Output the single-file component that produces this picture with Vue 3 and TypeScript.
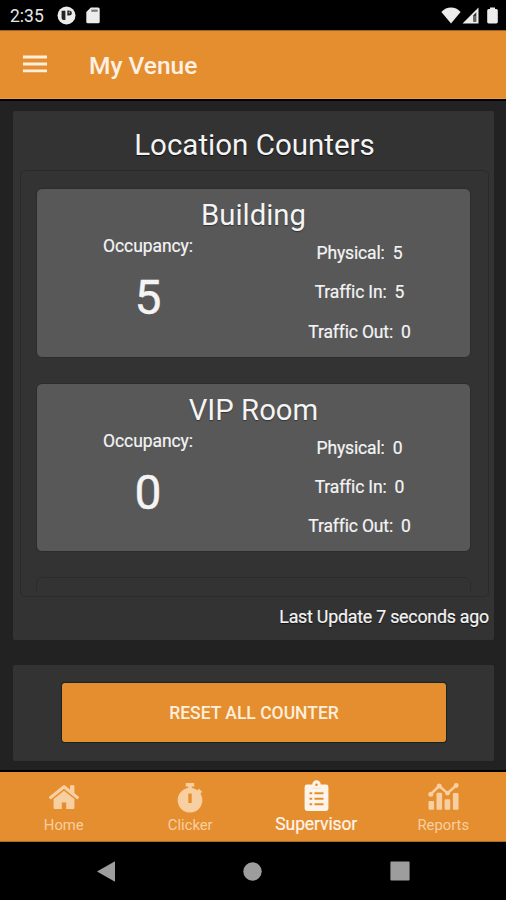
<script setup lang="ts">
interface Counter {
  name: string
  occupancy: number
  physical: number
  trafficIn: number
  trafficOut: number
}

interface Tab {
  id: string
  label: string
}

const counters: Counter[] = [
  { name: 'Building', occupancy: 5, physical: 5, trafficIn: 5, trafficOut: 0 },
  { name: 'VIP Room', occupancy: 0, physical: 0, trafficIn: 0, trafficOut: 0 },
]

const tabs: Tab[] = [
  { id: 'home', label: 'Home' },
  { id: 'clicker', label: 'Clicker' },
  { id: 'supervisor', label: 'Supervisor' },
  { id: 'reports', label: 'Reports' },
]

const activeTab = 'supervisor'
</script>

<template>
  <div class="screen">
    <div class="status">
      <span class="clock">2:35</span>
      <svg class="app-dot" width="19" height="19" viewBox="0 0 19 19">
        <circle cx="9.5" cy="9.5" r="9" fill="#ececec" />
        <path d="M4.600 4.800h3.800v9.200H6.600q-2 0-2-2z" fill="#222" />
        <path d="M10.300 4.600h1.500q3 0 3 2.500t-3 2.500h-1.500z" fill="#222" />
        <path d="M11.700 5.500h1.400v1.900h-1.400z" fill="#999" />
      </svg>
      <svg class="sd" width="14" height="17" viewBox="0 0 14 17">
        <path d="M4.8.5h7.4q1.5 0 1.5 1.5v12.8q0 1.5-1.5 1.5H1.8Q.3 16.300.3 14.800V5z" fill="#ececec" />
        <path d="M5.300 2.600h6.400v2.200H5.300z" fill="#777" />
      </svg>
      <span class="spacer"></span>
      <svg width="20" height="17" viewBox="0 0 20 17">
        <path d="M.4 5Q4.500.6 10 .6T19.600 5L10 16.500z" fill="#ececec" />
      </svg>
      <svg class="signal" width="17" height="17" viewBox="0 0 17 17">
        <path d="M.5 16.500 16.500.5v16z" fill="#ececec" />
        <path d="M11.300 8.200 14.300 5.300v9.500h-3z" fill="#333" />
        <path d="M12.500 9h1v5h-1z" fill="#999" />
      </svg>
      <svg class="battery" width="11" height="17" viewBox="0 0 11 17">
        <path d="M3 .4h5v1.500h1.300q1.500 0 1.500 1.500v11.700q0 1.400-1.500 1.400H1.700Q.2 16.500.2 15.100V3.400q0-1.500 1.500-1.500H3z" fill="#ececec" />
      </svg>
    </div>

    <header class="app-bar">
      <svg class="menu" width="24" height="18" viewBox="0 0 24 18">
        <path d="M0 2h24M0 9h24M0 15.800h24" stroke="#fdeedd" stroke-width="2.800" />
      </svg>
      <h1>My Venue</h1>
    </header>

    <main class="content">
      <section class="panel locations">
        <h2>Location Counters</h2>
        <div class="list">
          <div class="list-view">
            <article v-for="c in counters" :key="c.name" class="card">
              <h3>{{ c.name }}</h3>
              <div class="columns">
                <div class="occupancy">
                  <span>Occupancy:</span>
                  <strong>{{ c.occupancy }}</strong>
                </div>
                <div class="stats">
                  <p>Physical:<b>{{ c.physical }}</b></p>
                  <p>Traffic In:<b>{{ c.trafficIn }}</b></p>
                  <p>Traffic Out:<b>{{ c.trafficOut }}</b></p>
                </div>
              </div>
            </article>
            <div class="card empty"></div>
          </div>
        </div>
        <p class="updated">Last Update 7 seconds ago</p>
      </section>

      <section class="panel actions">
        <button type="button" class="reset">RESET ALL COUNTER</button>
      </section>
    </main>

    <nav class="tabs">
      <div v-for="t in tabs" :key="t.id" class="tab" :class="{ active: t.id === activeTab }">
        <svg v-if="t.id === 'home'" class="icon" width="30" height="26" viewBox="0 0 30 26">
          <path d="M1.700 13.500 15 2.800l13.300 10.700" fill="none" stroke="currentColor" stroke-width="3.200" stroke-linecap="round" stroke-linejoin="round" />
          <path d="M21 1.800q0-.5.5-.5h3.400q.5 0 .5.5v9.700L21 8z" fill="currentColor" />
          <path d="M15 6.700 25.400 15.100v8.900q0 1-1 1h-7.200v-6.500h-4.400V25H5.600q-1 0-1-1v-8.900z" fill="currentColor" />
        </svg>
        <svg v-else-if="t.id === 'clicker'" class="icon" width="26" height="31" viewBox="0 0 26 31">
          <path d="M8.800 1h8.400v3.500h-2.400v3h-3.600v-3H8.800z" fill="currentColor" />
          <path d="m19.200 9.700 2.700-3 3.200 3-2.900 3z" fill="currentColor" />
          <path fill-rule="evenodd" d="M13 5.800a12.400 12.400 0 1 0 .01 0zM11.300 11.500h3.400v9.500h-3.400z" fill="currentColor" />
        </svg>
        <svg v-else-if="t.id === 'supervisor'" class="icon" width="25" height="32" viewBox="0 0 25 32">
          <path d="M3 4.500h5.300a4.200 4.200 0 0 1 8.400 0H22q2.400 0 2.400 2.400v21.600q0 2.400-2.400 2.400H3Q.6 30.900.6 28.500V6.900Q.6 4.500 3 4.500z" fill="currentColor" />
          <circle cx="12.500" cy="4.800" r="1.300" fill="#e58e30" />
          <path d="M5.500 13.200h2.700M5.500 18.700h2.700M5.500 24.200h2.700M10.500 13.200h9M10.500 18.700h9M10.500 24.200h9" stroke="#e58e30" stroke-width="1.900" />
          <path d="M7.500 8.300h10" stroke="#fae3ca" stroke-width="1" />
        </svg>
        <svg v-else class="icon" width="31" height="27" viewBox="0 0 31 27">
          <path d="M2.800 11.200 11.200 3l8.300 7.200 8.700-7.700" fill="none" stroke="currentColor" stroke-width="2.500" />
          <g fill="currentColor">
            <circle cx="2.800" cy="11.200" r="2.500" />
            <circle cx="11.200" cy="3" r="2.500" />
            <circle cx="19.500" cy="10.200" r="2.300" />
            <circle cx="28.200" cy="2.500" r="2.400" />
            <rect x=".5" y="18" width="5.600" height="8.700" rx="1" />
            <rect x="8.500" y="9.800" width="5.600" height="16.900" rx="1" />
            <rect x="16.600" y="16.200" width="5.600" height="10.500" rx="1" />
            <rect x="24.900" y="10" width="5.600" height="16.700" rx="1" />
          </g>
        </svg>
        <span>{{ t.label }}</span>
      </div>
    </nav>

    <div class="system-nav">
      <svg width="18" height="21" viewBox="0 0 18 21"><path d="M0 10.500 18 .3v20.400z" fill="#9d9d9d" /></svg>
      <svg width="19" height="19" viewBox="0 0 19 19"><circle cx="9.500" cy="9.500" r="9.200" fill="#9d9d9d" /></svg>
      <svg width="20" height="20" viewBox="0 0 20 20"><rect x=".4" y=".4" width="19.200" height="19.200" rx="1" fill="#9d9d9d" /></svg>
    </div>
  </div>
</template>

<style>
body {
  margin: 0;
  background: #000;
}
</style>

<style scoped>
.screen {
  display: flex;
  flex-direction: column;
  width: 506px;
  height: 900px;
  overflow: hidden;
  background: #000;
  color: #f4f4f4;
  font-family: Roboto, "Liberation Sans", sans-serif;
}
h1, h2, h3, p {
  margin: 0;
  font-weight: 400;
}
svg {
  display: block;
  flex: none;
}
.status {
  display: flex;
  align-items: center;
  height: 30px;
  padding: 0 8px 0 10px;
  box-sizing: border-box;
}
.clock {
  width: 47px;
  padding-top: 2px;
  font-size: 17.5px;
  line-height: 20px;
  color: #e8e8e8;
}
.sd {
  margin-left: 10px;
}
.spacer {
  flex: 1;
}
.signal {
  margin-left: 1px;
}
.battery {
  margin-left: 8px;
}
.app-bar {
  display: flex;
  align-items: center;
  height: 69px;
  padding-left: 23px;
  box-sizing: border-box;
  background: #e58e30;
  box-shadow: inset 0 1px #9c601f, inset 0 -1px #ec9b42;
}
.menu {
  margin-top: -2px;
}
h1 {
  margin: 3px 0 0 42px;
  font-size: 24.5px;
  line-height: 30px;
  font-weight: 500;
  color: #fdf1e4;
}
.content {
  display: flex;
  flex-direction: column;
  gap: 25px;
  height: 669px;
  margin-top: 2px;
  padding: 10px 12px 0 13px;
  box-sizing: border-box;
  background: #222;
}
.panel {
  box-sizing: border-box;
  border-radius: 2px;
  background: #333;
}
.locations {
  height: 529px;
  padding: 15px 5px 0 7px;
}
h2 {
  height: 44px;
  font-size: 29.5px;
  line-height: 38px;
  text-align: center;
  text-shadow: 0 1px 1px #111;
}
.list {
  height: 427px;
  box-sizing: border-box;
  border: 1px solid #2a2a2a;
  border-radius: 5px;
}
.list-view {
  display: flex;
  flex-direction: column;
  gap: 25px;
  height: 420px;
  padding: 17px 17px 0 15px;
  box-sizing: border-box;
  overflow: hidden;
}
.card {
  flex: none;
  height: 169.5px;
  box-sizing: border-box;
  border: 1px solid #2c2c2c;
  border-radius: 6px;
  background: #585858;
}
.card.empty {
  background: none;
}
h3 {
  height: 45px;
  font-size: 29.3px;
  line-height: 53px;
  text-align: center;
  text-shadow: 0 1px 1px #333;
}
.columns {
  display: grid;
  grid-template-columns: 222px 1fr;
  font-size: 17.5px;
}
.occupancy {
  display: flex;
  flex-direction: column;
  align-items: center;
  line-height: 24px;
}
.occupancy span {
  letter-spacing: -0.08px;
  -webkit-text-stroke: 0.2px currentColor;
}
.occupancy strong {
  margin-top: 12px;
  font-size: 48px;
  line-height: 56px;
  font-weight: 400;
  -webkit-text-stroke: 0.4px currentColor;
}
.stats {
  padding: 7px 10px 0 0;
  letter-spacing: -0.15px;
  text-align: center;
  -webkit-text-stroke: 0.2px currentColor;
}
.stats p {
  height: 39.3px;
  line-height: 24px;
}
.stats b {
  margin-left: 8px;
  font-weight: 400;
}
.updated {
  font-size: 17.8px;
  letter-spacing: -0.22px;
  line-height: 40px;
  text-align: right;
  text-shadow: 0 1px 1px #111;
  -webkit-text-stroke: 0.2px currentColor;
}
.actions {
  height: 96px;
  padding: 18px 49px 0;
}
.reset {
  display: block;
  width: 384px;
  height: 59px;
  padding: 0;
  border: 0;
  border-radius: 3px;
  background: #e58e30;
  box-shadow: 0 0 1px 1px #172326;
  color: #fdeedd;
  font: 500 17.5px/60px Roboto, "Liberation Sans", sans-serif;
}
.tabs {
  display: grid;
  grid-template-columns: repeat(4, 1fr);
  height: 70px;
  margin-top: 2px;
  background: #e58e30;
  box-shadow: inset 0 -1px #a86c2b;
}
.tab {
  display: flex;
  flex-direction: column;
  align-items: center;
  justify-content: flex-end;
  padding: 0 0 6px 1px;
  color: #f8cfa0;
  font-size: 14.8px;
  line-height: 22px;
}
.tab .icon {
  margin-bottom: 4px;
}
.tab:nth-child(2) .icon {
  margin-bottom: 1px;
}
.tab.active {
  padding: 0 0 7px;
  color: #fef4ea;
  font-size: 17.5px;
  letter-spacing: -0.1px;
  -webkit-text-stroke: 0.2px currentColor;
}
.tab.active .icon {
  margin-bottom: 1px;
}
.system-nav {
  display: flex;
  align-items: center;
  justify-content: space-between;
  height: 58px;
  padding: 0 96px 0 97px;
}
</style>
